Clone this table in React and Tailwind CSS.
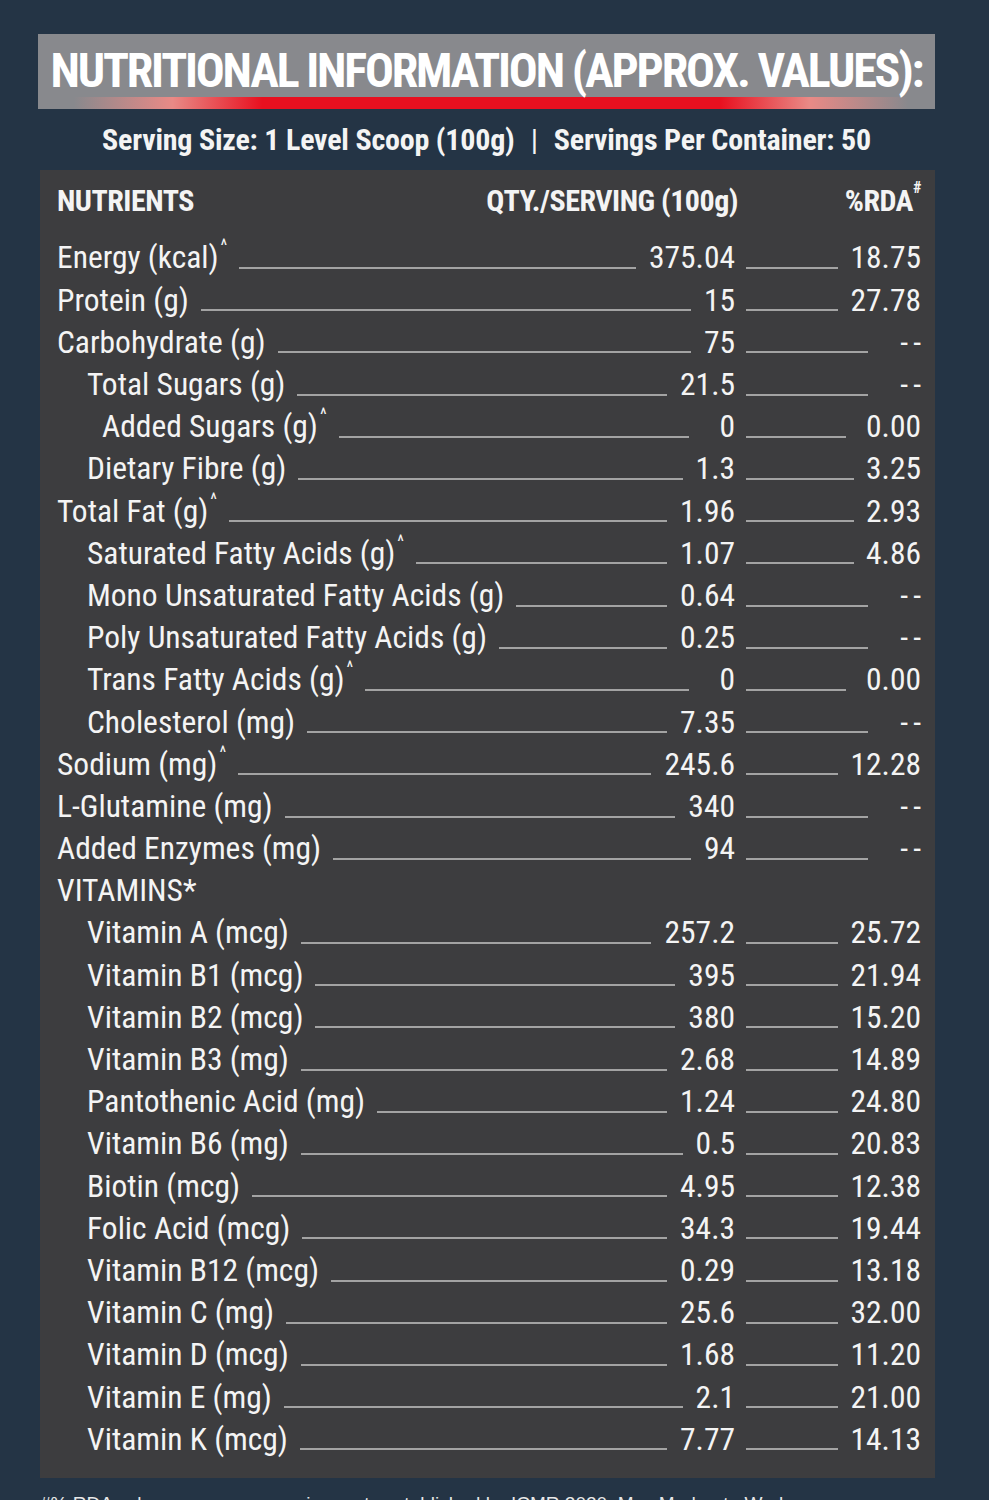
const rows = [
  { name: "Energy (kcal)", caret: true, qty: "375.04", rda: "18.75", lvl: 0 },
  { name: "Protein (g)", qty: "15", rda: "27.78", lvl: 0 },
  { name: "Carbohydrate (g)", qty: "75", rda: "--", lvl: 0 },
  { name: "Total Sugars (g)", qty: "21.5", rda: "--", lvl: 1 },
  { name: "Added Sugars (g)", caret: true, qty: "0", rda: "0.00", lvl: 2 },
  { name: "Dietary Fibre (g)", qty: "1.3", rda: "3.25", lvl: 1 },
  { name: "Total Fat (g)", caret: true, qty: "1.96", rda: "2.93", lvl: 0 },
  { name: "Saturated Fatty Acids (g)", caret: true, qty: "1.07", rda: "4.86", lvl: 1 },
  { name: "Mono Unsaturated Fatty Acids (g)", qty: "0.64", rda: "--", lvl: 1 },
  { name: "Poly Unsaturated Fatty Acids (g)", qty: "0.25", rda: "--", lvl: 1 },
  { name: "Trans Fatty Acids (g)", caret: true, qty: "0", rda: "0.00", lvl: 1 },
  { name: "Cholesterol (mg)", qty: "7.35", rda: "--", lvl: 1 },
  { name: "Sodium (mg)", caret: true, qty: "245.6", rda: "12.28", lvl: 0 },
  { name: "L-Glutamine (mg)", qty: "340", rda: "--", lvl: 0 },
  { name: "Added Enzymes (mg)", qty: "94", rda: "--", lvl: 0 },
  { name: "VITAMINS*", heading: true, lvl: 0 },
  { name: "Vitamin A (mcg)", qty: "257.2", rda: "25.72", lvl: 1 },
  { name: "Vitamin B1 (mcg)", qty: "395", rda: "21.94", lvl: 1 },
  { name: "Vitamin B2 (mcg)", qty: "380", rda: "15.20", lvl: 1 },
  { name: "Vitamin B3 (mg)", qty: "2.68", rda: "14.89", lvl: 1 },
  { name: "Pantothenic Acid (mg)", qty: "1.24", rda: "24.80", lvl: 1 },
  { name: "Vitamin B6 (mg)", qty: "0.5", rda: "20.83", lvl: 1 },
  { name: "Biotin (mcg)", qty: "4.95", rda: "12.38", lvl: 1 },
  { name: "Folic Acid (mcg)", qty: "34.3", rda: "19.44", lvl: 1 },
  { name: "Vitamin B12 (mcg)", qty: "0.29", rda: "13.18", lvl: 1 },
  { name: "Vitamin C (mg)", qty: "25.6", rda: "32.00", lvl: 1 },
  { name: "Vitamin D (mcg)", qty: "1.68", rda: "11.20", lvl: 1 },
  { name: "Vitamin E (mg)", qty: "2.1", rda: "21.00", lvl: 1 },
  { name: "Vitamin K (mcg)", qty: "7.77", rda: "14.13", lvl: 1 },
];

const indent = ["pl-0", "pl-[30px]", "pl-[45px]"];

const Row = ({ r }) => {
  if (r.heading) {
    return (
      <div className="h-[42.2px] flex items-center">
        <span>{r.name}</span>
      </div>
    );
  }
  const dash = r.rda === "--";
  const zero = r.qty === "0";
  return (
    <div className="h-[42.2px] flex items-center">
      <div className={`flex-1 flex items-center ${indent[r.lvl]}`}>
        <span className="whitespace-nowrap">
          {r.name}
          {r.caret && <span className="text-[18px] align-top relative top-[-2px] ml-[2px]">^</span>}
        </span>
        <div className={`flex-1 h-[2px] mt-[20px] ml-[12px] bg-[#a3a3a3] ${zero ? "mr-[30px]" : "mr-[13px]"}`} />
        <span>{r.qty}</span>
      </div>
      <div className="w-[186px] pl-[11px] flex items-center">
        <div className={`flex-1 h-[2px] mt-[20px] bg-[#a3a3a3] ${dash ? "mr-[32px]" : zero ? "mr-[20px]" : "mr-[12px]"}`} />
        <span className={dash ? "tracking-[5px] mr-[-5px]" : ""}>{r.rda}</span>
      </div>
    </div>
  );
};

const App = () => {
  const narrow = "font-['Liberation_Sans_Narrow','Roboto_Condensed','DejaVu_Sans_Condensed','Liberation_Sans',sans-serif]";
  return (
    <div className={`min-h-screen bg-[#243445] pt-[34px] text-[#f4f4f4] ${narrow}`}>
      <div className="ml-[38px] w-[897px] bg-[#88898d]">
        <h1 className="h-[63px] pt-[10px] flex items-center justify-center text-[48px] font-bold tracking-[-2.2px] text-white">
          NUTRITIONAL INFORMATION (APPROX. VALUES):
        </h1>
        <div className="h-[12px] bg-[linear-gradient(90deg,#88898d_4%,#e98a86_15%,#e8101f_25%,#e8101f_76%,#e98a86_86%,#88898d_97%)]" />
      </div>
      <div className="ml-[38px] w-[897px] h-[61px] flex items-center justify-center text-[30px] font-bold tracking-[-0.2px]">
        Serving Size: 1 Level Scoop (100g)
        <span className="mx-[16px] font-normal">|</span>
        Servings Per Container: 50
      </div>
      <div className="ml-[40px] w-[895px] bg-[#3d3d3f] pl-[17px] pr-[14px] pt-[9px] pb-[18px] text-[31.5px]">
        <div className="h-[42px] mb-[16px] flex items-center text-[30px] font-bold tracking-[-0.5px]">
          <div className="flex-1 flex items-center justify-between">
            <span>NUTRIENTS</span>
            <span className="mr-[-3px]">QTY./SERVING (100g)</span>
          </div>
          <div className="w-[186px] text-right">
            %RDA<span className="text-[16px] align-top relative top-[-2px]">#</span>
          </div>
        </div>
        {rows.map((r) => (
          <Row key={r.name} r={r} />
        ))}
      </div>
      <p className="ml-[40px] pt-[12px] text-[19px] font-['Liberation_Sans',sans-serif] text-[#e8e8e8]">
        #% RDA values are as per requirements established by ICMR 2020, Max Moderate Worker
      </p>
    </div>
  );
};

export default App;
